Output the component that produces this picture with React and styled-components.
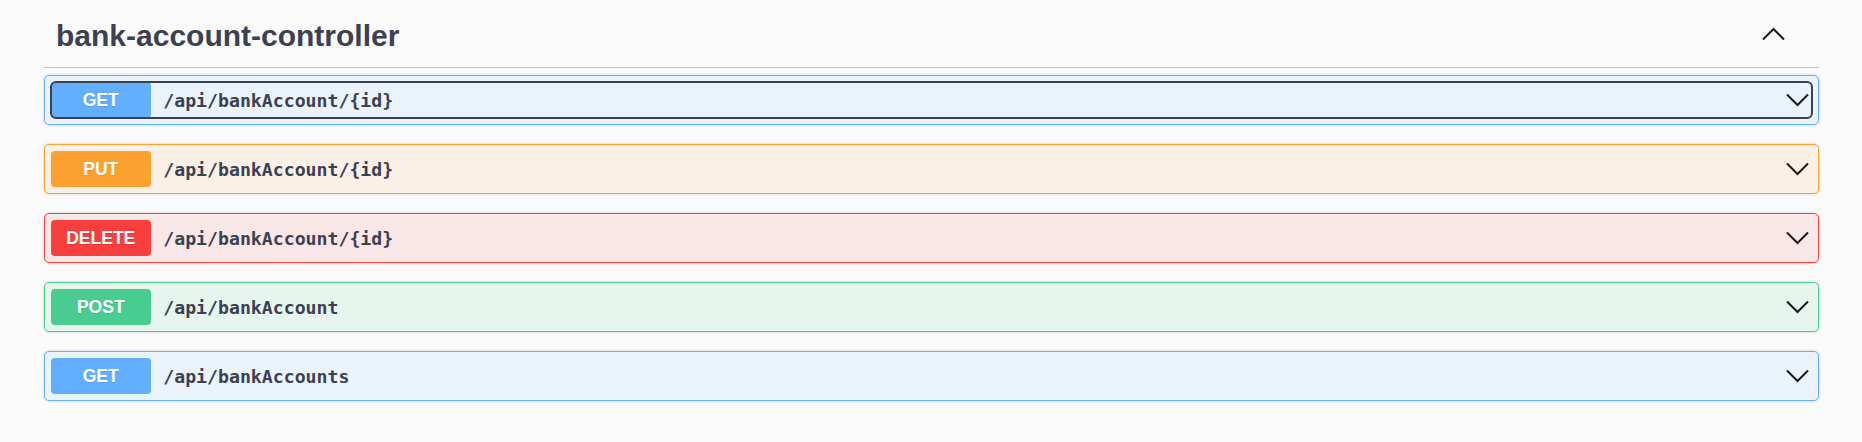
import React from "react";
import styled, { createGlobalStyle } from "styled-components";

const GlobalStyle = createGlobalStyle`
  html, body {
    margin: 0;
    padding: 0;
    background: #fafafa;
  }
  * {
    box-sizing: border-box;
  }
`;

const methodColors = {
  GET: "97, 175, 254",
  PUT: "252, 161, 48",
  DELETE: "249, 62, 62",
  POST: "73, 204, 144",
};

const Wrapper = styled.div`
  max-width: 1825px;
  margin: 0 auto;
  padding: 0 25px;
  font-family: "Liberation Sans", Arial, sans-serif;
  color: #3b4151;
`;

const TagHeader = styled.h3`
  display: flex;
  align-items: center;
  height: 68px;
  margin: 0 0 7px;
  padding: 4px 32px 0 12.5px;
  border-bottom: 1px solid rgba(59, 65, 81, 0.3);
  font-size: 30px;
  font-weight: 700;
  color: #3b4151;
`;

const TagTitle = styled.span`
  flex: 1;
`;

const ToggleButton = styled.button`
  display: flex;
  align-items: center;
  justify-content: center;
  padding: 0;
  margin-top: -3px;
  border: none;
  background: none;
  cursor: pointer;
`;

const OpBlock = styled.div`
  margin-bottom: 19px;
  border: 1px solid rgb(${(p) => methodColors[p.$method]});
  border-radius: 5px;
  background: rgba(${(p) => methodColors[p.$method]}, 0.1);
  box-shadow: 0 0 3px rgba(0, 0, 0, 0.19);
`;

const Summary = styled.div`
  display: flex;
  align-items: center;
  padding: 6px 6.25px;
  outline: ${(p) => (p.$focused ? "2px solid #3b4151" : "none")};
  outline-offset: -7px;
  border-radius: 11px;
`;

const Method = styled.span`
  min-width: 100px;
  padding: 7.5px 0;
  border-radius: 4px;
  background: rgb(${(p) => methodColors[p.$method]});
  color: #fff;
  font-family: "Liberation Sans", Arial, sans-serif;
  font-size: 17.5px;
  font-weight: 700;
  line-height: 21px;
  text-align: center;
  text-shadow: 0 1px 0 rgba(0, 0, 0, 0.1);
`;

const Path = styled.span`
  flex: 1;
  padding: 0 12.5px;
  font-family: "DejaVu Sans Mono", "Liberation Mono", monospace;
  font-size: 18.2px;
  font-weight: 700;
  color: #3b4151;
`;

const Arrow = styled.svg`
  display: block;
  margin-right: 2px;
`;

function Chevron({ up }) {
  return (
    <Arrow width="23" height="14" viewBox="0 0 23 14">
      <polyline
        points={up ? "1,12.5 11.5,2 22,12.5" : "1,1.5 11.5,12 22,1.5"}
        fill="none"
        stroke="#1b1b1b"
        strokeWidth="2"
      />
    </Arrow>
  );
}

const operations = [
  { method: "GET", path: "/api/bankAccount/{id}", focused: true },
  { method: "PUT", path: "/api/bankAccount/{id}" },
  { method: "DELETE", path: "/api/bankAccount/{id}" },
  { method: "POST", path: "/api/bankAccount" },
  { method: "GET", path: "/api/bankAccounts" },
];

export default function App() {
  return (
    <>
      <GlobalStyle />
      <Wrapper>
        <TagHeader>
          <TagTitle>bank-account-controller</TagTitle>
          <ToggleButton aria-label="Collapse operation">
            <Chevron up />
          </ToggleButton>
        </TagHeader>
        {operations.map((op, i) => (
          <OpBlock key={i} $method={op.method}>
            <Summary $focused={op.focused}>
              <Method $method={op.method}>{op.method}</Method>
              <Path>{op.path}</Path>
              <Chevron />
            </Summary>
          </OpBlock>
        ))}
      </Wrapper>
    </>
  );
}
